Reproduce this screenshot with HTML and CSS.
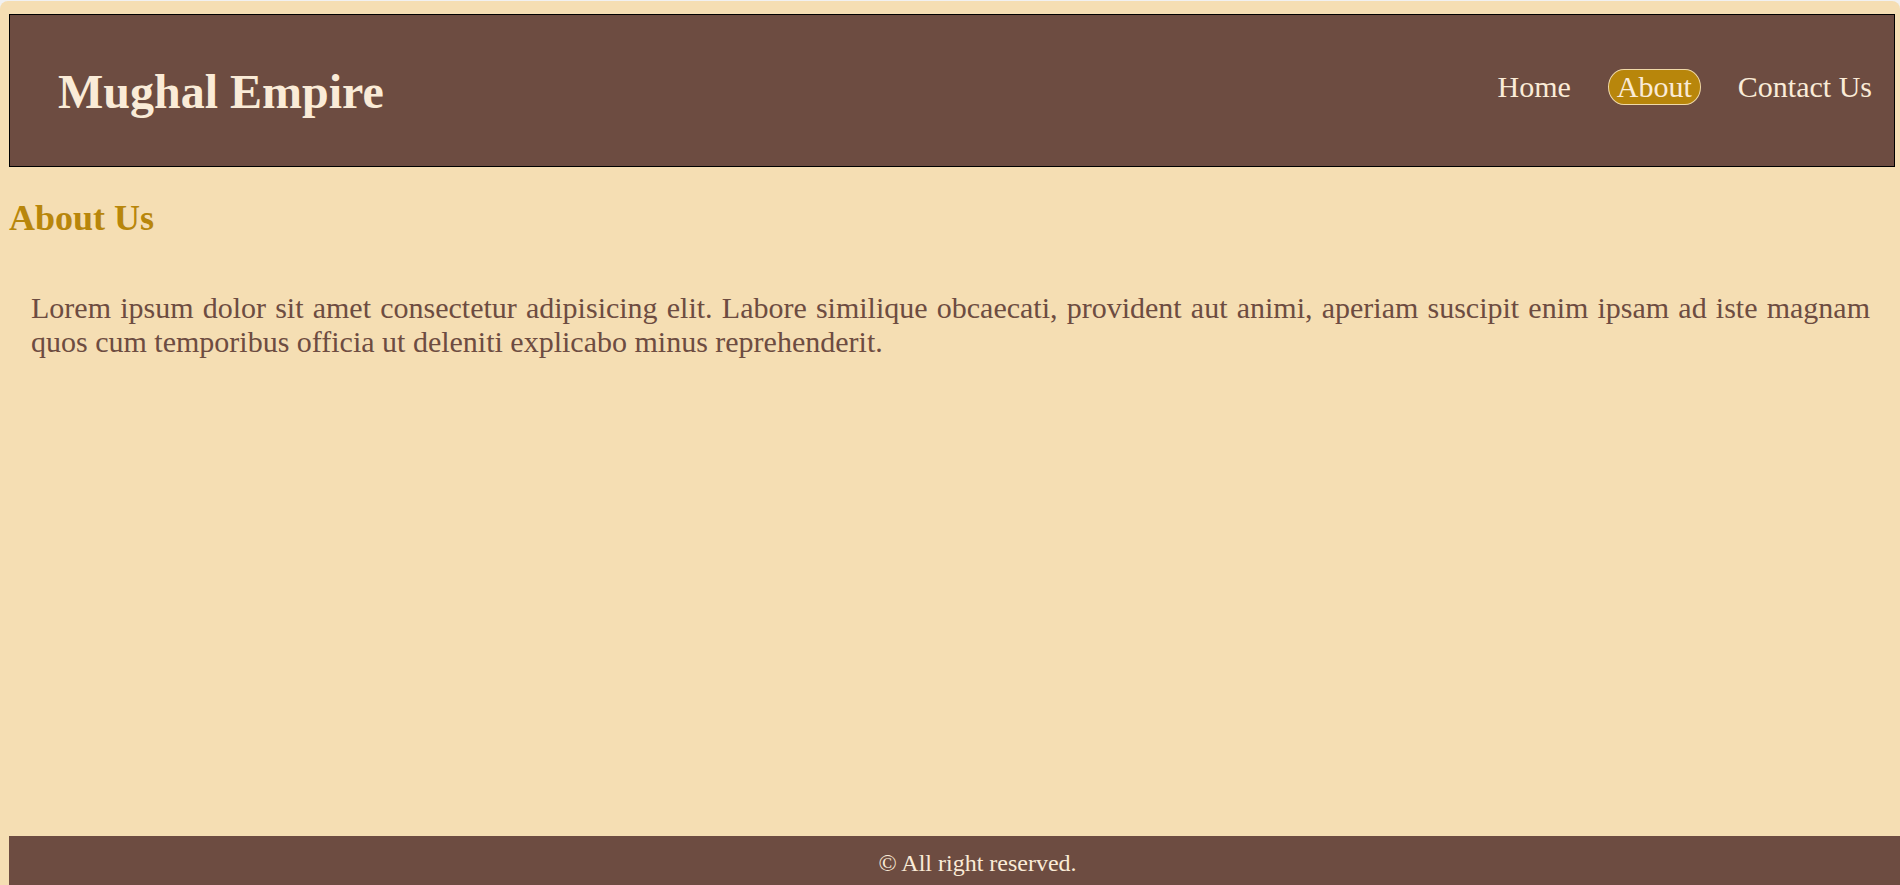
FILE: index.html
```html
<!DOCTYPE html>
<html lang="en">
<head>
<meta charset="utf-8">
<title>Mughal Empire - About</title>
<link rel="stylesheet" href="styles.css">
</head>
<body>
  <header class="site-header">
    <h1 class="brand">Mughal Empire</h1>
    <nav class="main-nav">
      <a class="nav-link" href="#">Home</a>
      <a class="nav-link active" href="#">About</a>
      <a class="nav-link" href="#">Contact Us</a>
    </nav>
  </header>
  <main class="content">
    <h2 class="section-title">About Us</h2>
    <p class="section-text">Lorem ipsum dolor sit amet consectetur adipisicing elit. Labore similique obcaecati, provident aut animi, aperiam suscipit enim ipsam ad iste magnam quos cum temporibus officia ut deleniti explicabo minus reprehenderit.</p>
  </main>
  <footer class="site-footer">&copy; All right reserved.</footer>
</body>
</html>
```
FILE: styles.css
```css
html {
  background: #f1f1f1;
  overflow: hidden;
  height: 100%;
}

body {
  margin: 1px 0 0;
  min-height: calc(100% - 1px);
  background: #f5deb3;
  border-radius: 8px 8px 0 0;
  font-family: "Liberation Serif", "Times New Roman", serif;
  color: #6d4c41;
  display: flow-root;
}

.site-header {
  margin: 13px 5px 0 9px;
  height: 151px;
  border: 1px solid #000;
  background: #6d4c41;
  padding: 0 13px 0 48px;
  display: flex;
  align-items: center;
  justify-content: space-between;
}

.brand {
  margin: 2px 0 0;
  font-size: 48px;
  font-weight: bold;
  color: #faebd7;
}

.main-nav {
  display: flex;
  gap: 28px;
  margin-bottom: 8px;
}

.nav-link {
  font-size: 30px;
  color: #faebd7;
  text-decoration: none;
  padding: 0 8px;
  border: 1px solid transparent;
  border-radius: 16px / 18px;
}

.nav-link.active {
  background: #b8860b;
  border-color: #f0d9a8;
}

.content {
  margin: 0 5px 0 9px;
}

.section-title {
  margin: 0.83em 0;
  font-size: 36px;
  font-weight: bold;
  color: #b8860b;
}

.section-text {
  margin: 30px 0;
  padding: 22px 25px 22px 22px;
  font-size: 30px;
  text-align: justify;
  color: #6d4c41;
}

.site-footer {
  position: fixed;
  left: 9px;
  right: -46px;
  bottom: 0;
  background: #6d4c41;
  color: #faebd7;
  font-size: 24px;
  text-align: center;
  padding: 14px 0 8px;
}
```
